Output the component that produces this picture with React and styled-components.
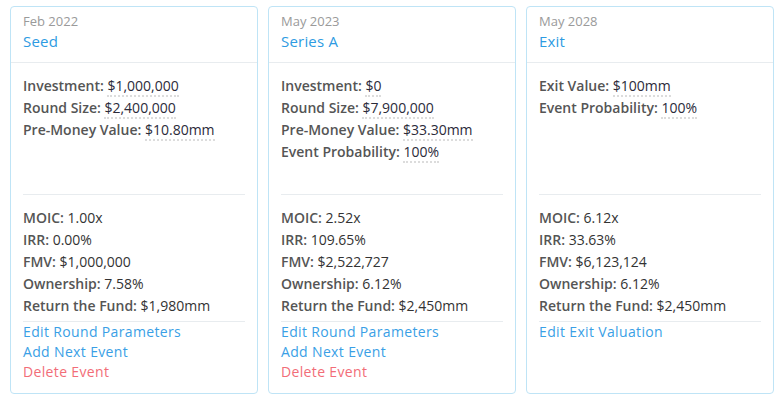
import React from 'react';
import styled, { createGlobalStyle } from 'styled-components';

const GlobalStyle = createGlobalStyle`
  body {
    margin: 0;
    background: #fff;
    font-family: 'Open Sans', 'Liberation Sans', sans-serif;
  }
`;

const events = [
  {
    date: 'Feb 2022',
    name: 'Seed',
    params: [
      ['Investment', '$1,000,000'],
      ['Round Size', '$2,400,000'],
      ['Pre-Money Value', '$10.80mm'],
    ],
    stats: [
      ['MOIC', '1.00x'],
      ['IRR', '0.00%'],
      ['FMV', '$1,000,000'],
      ['Ownership', '7.58%'],
      ['Return the Fund', '$1,980mm'],
    ],
    actions: [
      ['Edit Round Parameters'],
      ['Add Next Event'],
      ['Delete Event', true],
    ],
  },
  {
    date: 'May 2023',
    name: 'Series A',
    params: [
      ['Investment', '$0'],
      ['Round Size', '$7,900,000'],
      ['Pre-Money Value', '$33.30mm'],
      ['Event Probability', '100%'],
    ],
    stats: [
      ['MOIC', '2.52x'],
      ['IRR', '109.65%'],
      ['FMV', '$2,522,727'],
      ['Ownership', '6.12%'],
      ['Return the Fund', '$2,450mm'],
    ],
    actions: [
      ['Edit Round Parameters'],
      ['Add Next Event'],
      ['Delete Event', true],
    ],
  },
  {
    date: 'May 2028',
    name: 'Exit',
    params: [
      ['Exit Value', '$100mm'],
      ['Event Probability', '100%'],
    ],
    stats: [
      ['MOIC', '6.12x'],
      ['IRR', '33.63%'],
      ['FMV', '$6,123,124'],
      ['Ownership', '6.12%'],
      ['Return the Fund', '$2,450mm'],
    ],
    actions: [['Edit Exit Valuation']],
  },
];

const App = () => (
  <>
    <GlobalStyle />
    <Timeline>
      {events.map((ev) => (
        <Card key={ev.name}>
          <CardHeader>
            <EventDate>{ev.date}</EventDate>
            <EventName>{ev.name}</EventName>
          </CardHeader>
          <CardBody>
            <Params>
              {ev.params.map(([label, value]) => (
                <Line key={label}>
                  <Label>{label}:</Label> <Editable>{value}</Editable>
                </Line>
              ))}
            </Params>
            <Stats>
              {ev.stats.map(([label, value]) => (
                <Line key={label}>
                  <Label>{label}:</Label> {value}
                </Line>
              ))}
            </Stats>
            <Actions>
              {ev.actions.map(([text, danger]) => (
                <Action key={text} $danger={danger}>{text}</Action>
              ))}
            </Actions>
          </CardBody>
        </Card>
      ))}
    </Timeline>
  </>
);

export default App;

const Timeline = styled.div`
  display: flex;
  gap: 10px;
  padding: 6px 10px;
`;

const Card = styled.div`
  width: 248px;
  height: 388px;
  box-sizing: border-box;
  border: 1px solid #bfe4f6;
  border-radius: 4px;
  display: flex;
  flex-direction: column;
`;

const CardHeader = styled.div`
  height: 56px;
  box-sizing: border-box;
  padding: 5px 12px 0;
  border-bottom: 1px solid #e8ecef;
`;

const EventDate = styled.div`
  font-size: 13px;
  line-height: 18px;
  color: #9a9a9a;
`;

const EventName = styled.div`
  font-size: 15px;
  line-height: 22px;
  color: #2d9be2;
  letter-spacing: 0.2px;
`;

const CardBody = styled.div`
  padding: 0 12px;
`;

const Params = styled.div`
  height: 132px;
  box-sizing: border-box;
  padding-top: 12px;
  border-bottom: 1px solid #e8ecef;
`;

const Stats = styled.div`
  padding: 12px 0 4px;
  border-bottom: 1px solid #e8ecef;
`;

const Line = styled.div`
  font-size: 14px;
  line-height: 22px;
  color: #333;
  white-space: nowrap;
`;

const Label = styled.span`
  font-weight: 600;
  color: #555;
`;

const Editable = styled.span`
  border-bottom: 2px dotted #dcdcdc;
  color: #2b2b3a;
`;

const Actions = styled.div`
  display: flex;
  flex-direction: column;
  align-items: flex-start;
`;

const Action = styled.span`
  font-size: 14px;
  line-height: 20px;
  letter-spacing: 0.35px;
  color: ${(p) => (p.$danger ? '#f26d78' : '#3a9fe6')};
  cursor: pointer;
`;
